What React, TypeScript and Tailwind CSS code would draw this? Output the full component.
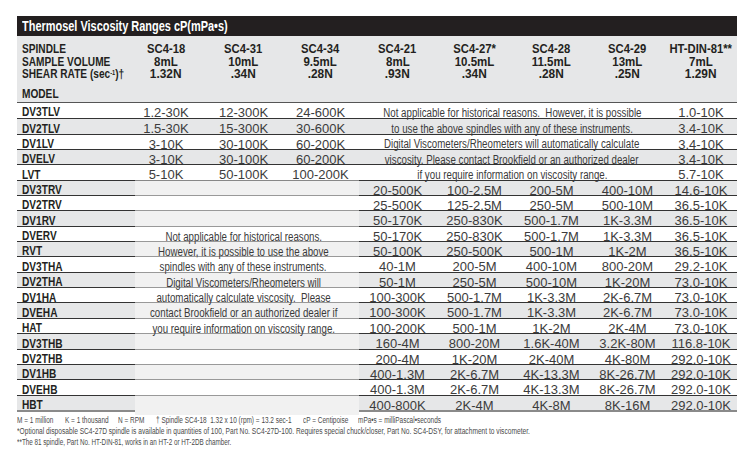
import type { ReactNode } from 'react';

const cols = 'grid grid-cols-[118px_70px_77px_77px_77px_77px_77px_75px_72px]';
const font = '[font-family:"Liberation_Sans",Arial,sans-serif]';

// no condensed face is installed, so squeeze Liberation Sans horizontally.
// the scale class is always passed in, two scale-x classes on one span would clash
const Narrow = ({ children, className = '' }: { children: ReactNode; className?: string }) => (
    <span className={`inline-block whitespace-pre ${className}`}>{children}</span>
);

interface Spindle {
    name: string;
    vol: string;
    rate: string;
}

const spindles: Spindle[] = [
    { name: 'SC4-18', vol: '8mL', rate: '1.32N' },
    { name: 'SC4-31', vol: '10mL', rate: '.34N' },
    { name: 'SC4-34', vol: '9.5mL', rate: '.28N' },
    { name: 'SC4-21', vol: '8mL', rate: '.93N' },
    { name: 'SC4-27*', vol: '10.5mL', rate: '.34N' },
    { name: 'SC4-28', vol: '11.5mL', rate: '.28N' },
    { name: 'SC4-29', vol: '13mL', rate: '.25N' },
    { name: 'HT-DIN-81**', vol: '7mL', rate: '1.29N' },
];

// LV models: first three spindles + HT-DIN, middle four are merged note
const lvRows: [string, string, string, string, string, string][] = [
    ['DV3TLV', '1.2-30K', '12-300K', '24-600K', 'Not applicable for historical reasons.  However, it is possible', '1.0-10K'],
    ['DV2TLV', '1.5-30K', '15-300K', '30-600K', 'to use the above spindles with any of these instruments.', '3.4-10K'],
    ['DV1LV', '3-10K', '30-100K', '60-200K', 'Digital Viscometers/Rheometers will automatically calculate', '3.4-10K'],
    ['DVELV', '3-10K', '30-100K', '60-200K', 'viscosity. Please contact Brookfield or an authorized dealer', '3.4-10K'],
    ['LVT', '5-10K', '50-100K', '100-200K', 'if you require information on viscosity range.', '5.7-10K'],
];

// RV / HA / HB models: first three spindles merged into the note
const otherRows: [string, string, string, string, string, string, string][] = [
    ['DV3TRV', '', '20-500K', '100-2.5M', '200-5M', '400-10M', '14.6-10K'],
    ['DV2TRV', '', '25-500K', '125-2.5M', '250-5M', '500-10M', '36.5-10K'],
    ['DV1RV', '', '50-170K', '250-830K', '500-1.7M', '1K-3.3M', '36.5-10K'],
    ['DVERV', 'Not applicable for historical reasons.', '50-170K', '250-830K', '500-1.7M', '1K-3.3M', '36.5-10K'],
    ['RVT', 'However, it is possible to use the above', '50-100K', '250-500K', '500-1M', '1K-2M', '36.5-10K'],
    ['DV3THA', 'spindles with any of these instruments.', '40-1M', '200-5M', '400-10M', '800-20M', '29.2-10K'],
    ['DV2THA', 'Digital Viscometers/Rheometers will', '50-1M', '250-5M', '500-10M', '1K-20M', '73.0-10K'],
    ['DV1HA', 'automatically calculate viscosity.  Please', '100-300K', '500-1.7M', '1K-3.3M', '2K-6.7M', '73.0-10K'],
    ['DVEHA', 'contact Brookfield or an authorized dealer if', '100-300K', '500-1.7M', '1K-3.3M', '2K-6.7M', '73.0-10K'],
    ['HAT', 'you require information on viscosity range.', '100-200K', '500-1M', '1K-2M', '2K-4M', '73.0-10K'],
    ['DV3THB', '', '160-4M', '800-20M', '1.6K-40M', '3.2K-80M', '116.8-10K'],
    ['DV2THB', '', '200-4M', '1K-20M', '2K-40M', '4K-80M', '292.0-10K'],
    ['DV1HB', '', '400-1.3M', '2K-6.7M', '4K-13.3M', '8K-26.7M', '292.0-10K'],
    ['DVEHB', '', '400-1.3M', '2K-6.7M', '4K-13.3M', '8K-26.7M', '292.0-10K'],
    ['HBT', '', '400-800K', '2K-4M', '4K-8M', '8K-16M', '292.0-10K'],
];

const footLine1: [string, string][] = [
    ['M = 1 million', 'w-[48px]'],
    ['K = 1 thousand', 'w-[53px]'],
    ['N = RPM', 'w-[38px]'],
    ['† Spindle SC4-18  1.32 x 10 (rpm) = 13.2 sec-1', 'w-[147px]'],
    ['cP = Centipoise', 'w-[55px]'],
    ['mPa•s = milliPascal•seconds', 'w-[90px]'],
];

const valueCls = `flex items-center justify-center text-[13px] text-[#3c3c3c] whitespace-nowrap ${font}`;
const labelCls = `flex items-center pl-[5px] text-[12.5px] font-bold text-[#231f20] ${font}`;
const noteCls = `flex items-center justify-center text-[12px] text-[#3a3a3a] ${font}`;

const App = () => {
    return (
        <div className={`min-h-screen bg-white pl-[17px] pt-[16px] ${font}`}>
            <div className="w-[720px]">
                {/* Title bar */}
                <div className="h-[20px] bg-[#231f20] flex items-center pl-[5px] text-[15px] font-bold text-white">
                    <Narrow className="origin-left scale-x-[0.73]">Thermosel Viscosity Ranges cP(mPa•s)</Narrow>
                </div>

                {/* Header */}
                <div className="bg-[#e6e7e8] h-[66px] pt-[7px] text-[12.5px] font-bold text-[#231f20] leading-[12.5px]">
                    <div className={cols}>
                        <div className="pl-[5px] flex flex-col items-start">
                            <Narrow className="origin-left scale-x-[0.81]">SPINDLE</Narrow>
                            <Narrow className="origin-left scale-x-[0.81]">SAMPLE VOLUME</Narrow>
                            <Narrow className="origin-left scale-x-[0.81]">
                                SHEAR RATE (sec<sup className="text-[7px]">-1</sup>)†
                            </Narrow>
                            <Narrow className="origin-left scale-x-[0.81] mt-[7px]">MODEL</Narrow>
                        </div>
                        {spindles.map((s, i) => (
                            <div key={s.name} className={`flex flex-col items-center ${i === 0 ? 'pr-[8px]' : ''}`}>
                                <Narrow className="scale-x-[0.9]">{s.name}</Narrow>
                                <Narrow className="scale-x-[0.92]">{s.vol}</Narrow>
                                <Narrow className="scale-x-[0.95]">{s.rate}</Narrow>
                            </div>
                        ))}
                    </div>
                </div>

                {/* Body */}
                <div className="border-t border-[#555]">
                    {lvRows.map((r, i) => {
                        const bg = i % 2 === 1 ? 'bg-[#e6e7e8]' : 'bg-white';
                        return (
                            <div key={r[0]} className={`${cols} h-[15.35px] ${bg} ${i > 0 ? 'border-t border-[#333]' : ''}`}>
                                <div className={labelCls}>
                                    <Narrow className="origin-left scale-x-[0.81]">{r[0]}</Narrow>
                                </div>
                                <div className={`${valueCls} pr-[8px]`}>{r[1]}</div>
                                <div className={valueCls}>{r[2]}</div>
                                <div className={valueCls}>{r[3]}</div>
                                <div className={`${noteCls} col-span-4`}>
                                    <Narrow className="scale-x-[0.81]">{r[4]}</Narrow>
                                </div>
                                <div className={valueCls}>{r[5]}</div>
                            </div>
                        );
                    })}
                    {otherRows.map((r, idx) => {
                        const i = idx + lvRows.length;
                        const grey = i % 2 === 1;
                        const bg = grey ? 'bg-[#e6e7e8]' : 'bg-white';
                        return (
                            <div key={r[0]} className={`${cols} h-[15.35px] ${bg} border-t border-[#333]`}>
                                <div className={labelCls}>
                                    <Narrow className="origin-left scale-x-[0.81]">{r[0]}</Narrow>
                                </div>
                                <div
                                    className={`${noteCls} col-span-3 pr-[7px] -mt-px border-t ${grey ? 'bg-[#f1f1f1]' : 'bg-white'} ${
                                        idx === 0 ? 'border-[#888]' : 'border-[#999]'
                                    }`}
                                >
                                    <Narrow className="scale-x-[0.81]">{r[1]}</Narrow>
                                </div>
                                <div className={valueCls}>{r[2]}</div>
                                <div className={valueCls}>{r[3]}</div>
                                <div className={valueCls}>{r[4]}</div>
                                <div className={valueCls}>{r[5]}</div>
                                <div className={valueCls}>{r[6]}</div>
                            </div>
                        );
                    })}
                    <div className="h-[2px] bg-[#8a8a8a]" />
                </div>

                {/* Footnotes */}
                <div className="pt-[3px] text-[8.5px] leading-[11px] text-[#4a4a4a] flex flex-col items-start">
                    <div className="flex">
                        {footLine1.map(([t, w]) => (
                            <div key={t} className={`${w} shrink-0`}>
                                <Narrow className="origin-left scale-x-[0.76]">{t}</Narrow>
                            </div>
                        ))}
                    </div>
                    <Narrow className="origin-left scale-x-[0.78]">
                        *Optional disposable SC4-27D spindle is available in quantities of 100, Part No. SC4-27D-100. Requires special chuck/closer, Part No. SC4-DSY, for attachment to viscometer.
                    </Narrow>
                    <Narrow className="origin-left scale-x-[0.74]">**The 81 spindle, Part No. HT-DIN-81, works in an HT-2 or HT-2DB chamber.</Narrow>
                </div>
            </div>
        </div>
    );
};

export default App;
